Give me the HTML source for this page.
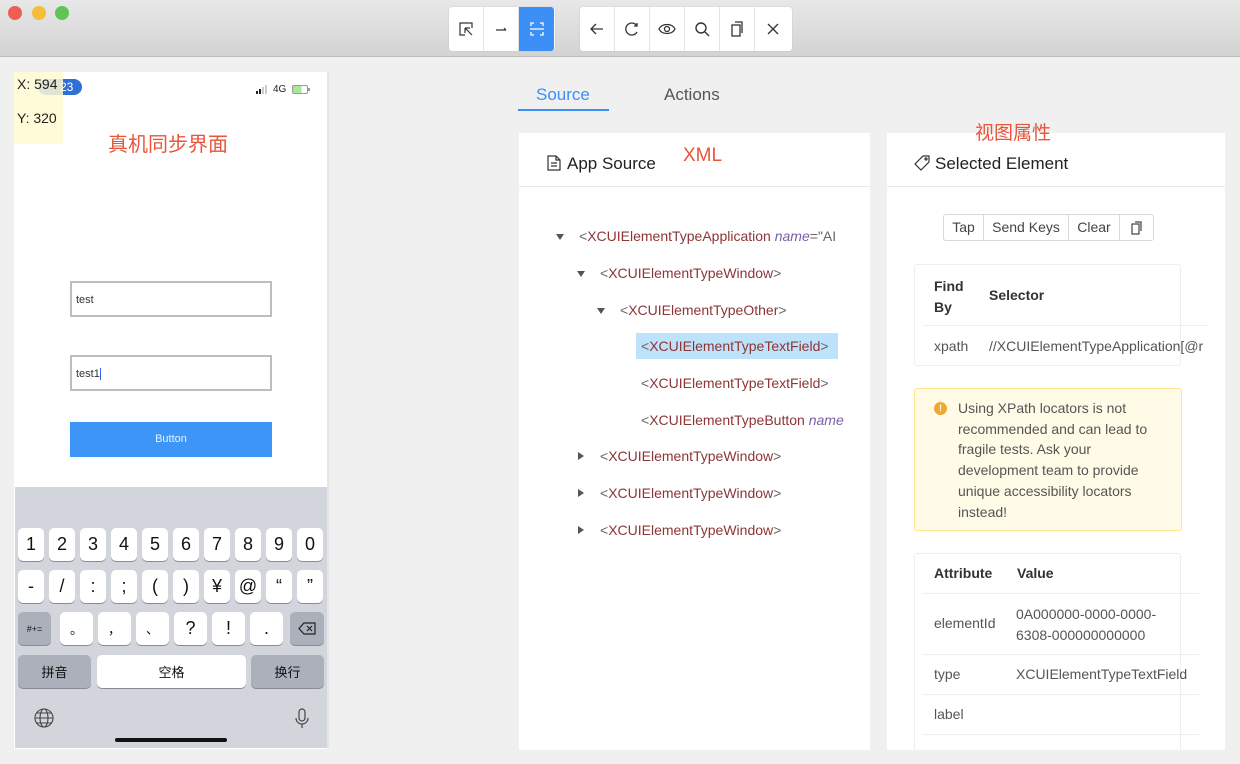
<!DOCTYPE html>
<html><head><meta charset="utf-8"><style>
*{box-sizing:border-box;margin:0;padding:0}
body{width:1240px;height:764px;overflow:hidden;background:#f0f0f0;font-family:"Liberation Sans","Noto Sans CJK SC",sans-serif;position:relative;color:#333}
.a{position:absolute}
.tb{left:0;top:0;width:1240px;height:57px;background:linear-gradient(#e8e8e8,#d3d3d3);border-bottom:1px solid #bdbdbd}
.dot{width:14px;height:14px;border-radius:50%;top:6px}
.grp{top:7px;height:44px;background:#fff;border-radius:3px;display:flex;box-shadow:0 0 1px #aaa}
.grp div{width:35px;height:44px;border-right:1px solid #e4e4e4;display:flex;align-items:center;justify-content:center}
.grp div:last-child{border-right:none}
.key{background:#fff;border-radius:5px;box-shadow:0 1px 0 #8a8c90;font-size:18px;color:#111;display:flex;align-items:center;justify-content:center;height:33px}
.gk{background:#abb0ba}
.card{background:#fff}
.tree{font-size:14px;color:#8c3535;white-space:nowrap}
.tree span.g{color:#666}
.tree i{color:#7a5ea8}
.tri{width:0;height:0;border-left:4px solid transparent;border-right:4px solid transparent;border-top:6px solid #555}
.trr{width:0;height:0;border-top:4px solid transparent;border-bottom:4px solid transparent;border-left:6px solid #555}
.td{font-size:14px;color:#555}
</style></head><body>
<div class="a tb"></div>
<div class="a dot" style="left:8px;background:#ee5e57"></div>
<div class="a dot" style="left:32px;background:#f5bd3b"></div>
<div class="a dot" style="left:55px;background:#5fc454"></div>
<div class="a grp" style="left:449px;width:106px">
<div><svg width="16" height="16" viewBox="0 0 16 16" fill="none" stroke="#333" stroke-width="1.2"><path d="M14 7V2H2v12h5"/><path d="M7 7l7 7M7 7v5M7 7h5"/></svg></div>
<div><svg width="14" height="14" viewBox="0 0 14 14" fill="none" stroke="#333" stroke-width="1.2"><path d="M2 8h10M12 8l-2-2"/></svg></div>
<div style="background:#3b8ff5;border-radius:0 3px 3px 0"><svg width="16" height="16" viewBox="0 0 16 16" fill="none" stroke="#fff" stroke-width="1.3"><path d="M2 5V2h3M11 2h3v3M14 11v3h-3M5 14H2v-3M1 8h14"/></svg></div>
</div>
<div class="a grp" style="left:580px;width:212px">
<div><svg width="16" height="16" viewBox="0 0 16 16" fill="none" stroke="#333" stroke-width="1.3"><path d="M14 8H2M7 3L2 8l5 5"/></svg></div>
<div><svg width="16" height="16" viewBox="0 0 16 16" fill="none" stroke="#333" stroke-width="1.3"><path d="M13 5A6 6 0 1 0 13 11M13 2v3h-3"/></svg></div>
<div><svg width="18" height="16" viewBox="0 0 18 16" fill="none" stroke="#333" stroke-width="1.3"><path d="M1 8c3-6 13-6 16 0c-3 6-13 6-16 0z"/><circle cx="9" cy="8" r="2.5"/></svg></div>
<div><svg width="16" height="16" viewBox="0 0 16 16" fill="none" stroke="#333" stroke-width="1.4"><circle cx="7" cy="7" r="5"/><path d="M11 11l4 4"/></svg></div>
<div><svg width="16" height="16" viewBox="0 0 16 16" fill="none" stroke="#333" stroke-width="1.3"><rect x="3" y="4" width="8" height="11"/><path d="M6 1h7v11"/></svg></div>
<div><svg width="14" height="14" viewBox="0 0 14 14" fill="none" stroke="#333" stroke-width="1.3"><path d="M2 2l10 10M12 2L2 12"/></svg></div>
</div>

<!-- phone -->
<div class="a" style="left:14px;top:72px;width:315px;height:677px;background:#fff;border-right:2px solid #e6e6e6"></div>
<div class="a" style="left:38px;top:79px;width:44px;height:16px;border-radius:8px;background:#2f6fd6;color:#fff;font-size:12px;padding-left:22px;line-height:16px">23</div>
<div class="a" style="left:14px;top:72px;width:49px;height:72px;background:rgba(255,250,210,.85)"></div>
<div class="a" style="left:17px;top:76px;font-size:14px;color:#222">X: 594</div>
<div class="a" style="left:17px;top:110px;font-size:14px;color:#222">Y: 320</div>
<svg class="a" style="left:256px;top:85px" width="14" height="9" viewBox="0 0 14 9"><rect x="0" y="6" width="2" height="3" fill="#222"/><rect x="3" y="4" width="2" height="5" fill="#222"/><rect x="6" y="2" width="2" height="7" fill="#ccc"/><rect x="9" y="0" width="2" height="9" fill="#ccc"/></svg>
<div class="a" style="left:273px;top:84px;font-size:10px;color:#222">4G</div>
<div class="a" style="left:292px;top:85px;width:16px;height:9px;border:1px solid #999;border-radius:2px;background:linear-gradient(90deg,#aee39b 60%,#fff 60%)"></div>
<div class="a" style="left:308px;top:88px;width:2px;height:3px;background:#999"></div>
<div class="a" style="left:108px;top:128px;font-size:20px;color:#e8553a">真机同步界面</div>
<div class="a" style="left:70px;top:281px;width:202px;height:36px;border:2px solid #bdbdbd;font-size:11px;padding:11px 4px">test</div>
<div class="a" style="left:70px;top:355px;width:202px;height:36px;border:2px solid #bdbdbd;font-size:11px;padding:11px 4px">test1<span style="border-left:1px solid #3366ff"></span></div>
<div class="a" style="left:70px;top:422px;width:202px;height:35px;background:#3d96f7;color:#e8f2ff;font-size:11px;text-align:center;line-height:35px">Button</div>
<div class="a" style="left:15px;top:487px;width:312px;height:261px;background:#d2d5db"></div>
<div id="kb"></div>
<div class="a" style="left:115px;top:738px;width:112px;height:4px;border-radius:2px;background:#111"></div>
<svg class="a" style="left:34px;top:708px" width="20" height="20" viewBox="0 0 20 20" fill="none" stroke="#444" stroke-width="1.1"><circle cx="10" cy="10" r="9"/><ellipse cx="10" cy="10" rx="4" ry="9"/><path d="M1 10h18M3 5h14M3 15h14"/></svg>
<svg class="a" style="left:295px;top:708px" width="14" height="22" viewBox="0 0 14 22" fill="none" stroke="#444" stroke-width="1.2"><rect x="4" y="1" width="6" height="12" rx="3"/><path d="M1 10a6 6 0 0 0 12 0M7 16v4"/></svg>

<!-- tabs -->
<div class="a" style="left:536px;top:85px;font-size:17px;color:#3b8ff5">Source</div>
<div class="a" style="left:664px;top:85px;font-size:17px;color:#555">Actions</div>
<div class="a" style="left:518px;top:109px;width:91px;height:2px;background:#3b8ff5"></div>

<!-- source card -->
<div class="a card" style="left:519px;top:133px;width:351px;height:617px"></div>
<div class="a" style="left:519px;top:186px;width:351px;height:1px;background:#e8e8e8"></div>
<svg class="a" style="left:547px;top:155px" width="14" height="16" viewBox="0 0 14 16" fill="none" stroke="#333" stroke-width="1.2"><path d="M1 1h8l4 4v10H1zM9 1v4h4M4 8h6M4 11h6"/></svg>
<div class="a" style="left:567px;top:154px;font-size:17px;color:#222">App Source</div>
<div class="a" style="left:683px;top:145px;font-size:19px;color:#e8553a">XML</div>
<div class="a tree" style="left:519px;top:226px;width:325px;height:330px;overflow:hidden">
<div class="a tri" style="left:37px;top:8px"></div><div class="a" style="left:60px;top:2px"><span class="g">&lt;</span>XCUIElementTypeApplication <i>name</i><span class="g">="AI</span></div>
<div class="a tri" style="left:58px;top:45px"></div><div class="a" style="left:81px;top:39px"><span class="g">&lt;</span>XCUIElementTypeWindow<span class="g">&gt;</span></div>
<div class="a tri" style="left:78px;top:82px"></div><div class="a" style="left:101px;top:76px"><span class="g">&lt;</span>XCUIElementTypeOther<span class="g">&gt;</span></div>
<div class="a" style="left:117px;top:107px;width:202px;height:26px;background:#bfe2fb"></div>
<div class="a" style="left:122px;top:112px"><span class="g">&lt;</span>XCUIElementTypeTextField<span class="g">&gt;</span></div>
<div class="a" style="left:122px;top:149px"><span class="g">&lt;</span>XCUIElementTypeTextField<span class="g">&gt;</span></div>
<div class="a" style="left:122px;top:186px"><span class="g">&lt;</span>XCUIElementTypeButton <i>name</i></div>
<div class="a trr" style="left:59px;top:226px"></div><div class="a" style="left:81px;top:222px"><span class="g">&lt;</span>XCUIElementTypeWindow<span class="g">&gt;</span></div>
<div class="a trr" style="left:59px;top:263px"></div><div class="a" style="left:81px;top:259px"><span class="g">&lt;</span>XCUIElementTypeWindow<span class="g">&gt;</span></div>
<div class="a trr" style="left:59px;top:300px"></div><div class="a" style="left:81px;top:296px"><span class="g">&lt;</span>XCUIElementTypeWindow<span class="g">&gt;</span></div>
</div>

<!-- element card -->
<div class="a card" style="left:887px;top:133px;width:338px;height:617px"></div>
<div class="a" style="left:887px;top:186px;width:338px;height:1px;background:#e8e8e8"></div>
<div class="a" style="left:975px;top:118px;font-size:19px;color:#e8553a">视图属性</div>
<svg class="a" style="left:914px;top:155px" width="16" height="16" viewBox="0 0 16 16" fill="none" stroke="#333" stroke-width="1.2"><path d="M9 1h6v6l-8 8-6-6z"/><circle cx="12" cy="4" r="1"/></svg>
<div class="a" style="left:935px;top:154px;font-size:17px;color:#222">Selected Element</div>
<div class="a" style="left:943px;top:214px;width:211px;height:27px;border:1px solid #d9d9d9;border-radius:3px;display:flex;font-size:14px;color:#444;line-height:25px">
<div style="width:40px;text-align:center;border-right:1px solid #d9d9d9">Tap</div>
<div style="width:85px;text-align:center;border-right:1px solid #d9d9d9">Send Keys</div>
<div style="width:51px;text-align:center;border-right:1px solid #d9d9d9">Clear</div>
<div style="flex:1;display:flex;align-items:center;justify-content:center"><svg width="12" height="14" viewBox="0 0 12 14" fill="none" stroke="#444" stroke-width="1.2"><rect x="1" y="3" width="7" height="10"/><path d="M4 1h6v9"/></svg></div>
</div>
<div class="a" style="left:914px;top:264px;width:267px;height:102px;border:1px solid #eee;border-radius:3px"></div>
<div class="a" style="left:934px;top:276px;font-size:14px;font-weight:bold;color:#333;line-height:21px">Find<br>By</div>
<div class="a" style="left:989px;top:287px;font-size:14px;font-weight:bold;color:#333">Selector</div>
<div class="a" style="left:923px;top:325px;width:285px;height:1px;background:#eee"></div>
<div class="a td" style="left:934px;top:338px">xpath</div>
<div class="a td" style="left:989px;top:338px;width:220px;overflow:hidden;white-space:nowrap">//XCUIElementTypeApplication[@r</div>
<div class="a" style="left:914px;top:388px;width:268px;height:143px;background:#fffbe6;border:1px solid #ffe58f;border-radius:3px"></div>
<div class="a" style="left:934px;top:402px;width:13px;height:13px;border-radius:50%;background:#f0a830;color:#fff;font-size:9px;text-align:center;line-height:13px;font-weight:bold">!</div>
<div class="a" style="left:958px;top:398px;width:215px;font-size:14px;line-height:20.7px;color:#555">Using XPath locators is not recommended and can lead to fragile tests. Ask your development team to provide unique accessibility locators instead!</div>
<div class="a" style="left:914px;top:553px;width:267px;height:200px;border:1px solid #eee;border-radius:3px"></div>
<div class="a" style="left:934px;top:565px;font-size:14px;font-weight:bold;color:#333">Attribute</div>
<div class="a" style="left:1017px;top:565px;font-size:14px;font-weight:bold;color:#333">Value</div>
<div class="a" style="left:923px;top:593px;width:276px;height:1px;background:#eee"></div>
<div class="a td" style="left:934px;top:615px">elementId</div>
<div class="a td" style="left:1016px;top:604px;line-height:21px">0A000000-0000-0000-<br>6308-000000000000</div>
<div class="a" style="left:923px;top:654px;width:276px;height:1px;background:#eee"></div>
<div class="a td" style="left:934px;top:666px">type</div>
<div class="a td" style="left:1016px;top:666px">XCUIElementTypeTextField</div>
<div class="a" style="left:923px;top:694px;width:276px;height:1px;background:#eee"></div>
<div class="a td" style="left:934px;top:706px">label</div>
<div class="a" style="left:923px;top:734px;width:276px;height:1px;background:#eee"></div>
<div class="a" style="left:0;top:750px;width:1240px;height:14px;background:#f0f0f0"></div>

<script>
var h='',r1='1234567890'.split(''),r2=['-','/',':',';','(',')','¥','@','“','”'];
function k(x,y,w,t,c,fs){h+='<div class="a key'+(c?' gk':'')+'" style="left:'+x+'px;top:'+y+'px;width:'+w+'px;'+(fs?'font-size:'+fs+'px':'')+'">'+t+'</div>';}
for(var i=0;i<10;i++){k(18+i*31,528,26,r1[i]);k(18+i*31,570,26,r2[i]);}
k(18,612,33,'#+=',1,9);
var r3=['。','，','、','?','!','.'],f3=[13,13,13,18,18,18];
for(i=0;i<6;i++)k(60+i*38,612,33,r3[i],0,f3[i]);
k(290,612,34,'<svg width="18" height="13" viewBox="0 0 18 13" fill="none" stroke="#222" stroke-width="1.2"><path d="M6 1h11v11H6L1 6.5z"/><path d="M9 4l5 5M14 4l-5 5"/></svg>',1);
k(18,655,73,'拼音',1,13);k(97,655,149,'空格',0,13);k(251,655,73,'换行',1,13);
document.getElementById('kb').innerHTML=h;
</script>
</body></html>
